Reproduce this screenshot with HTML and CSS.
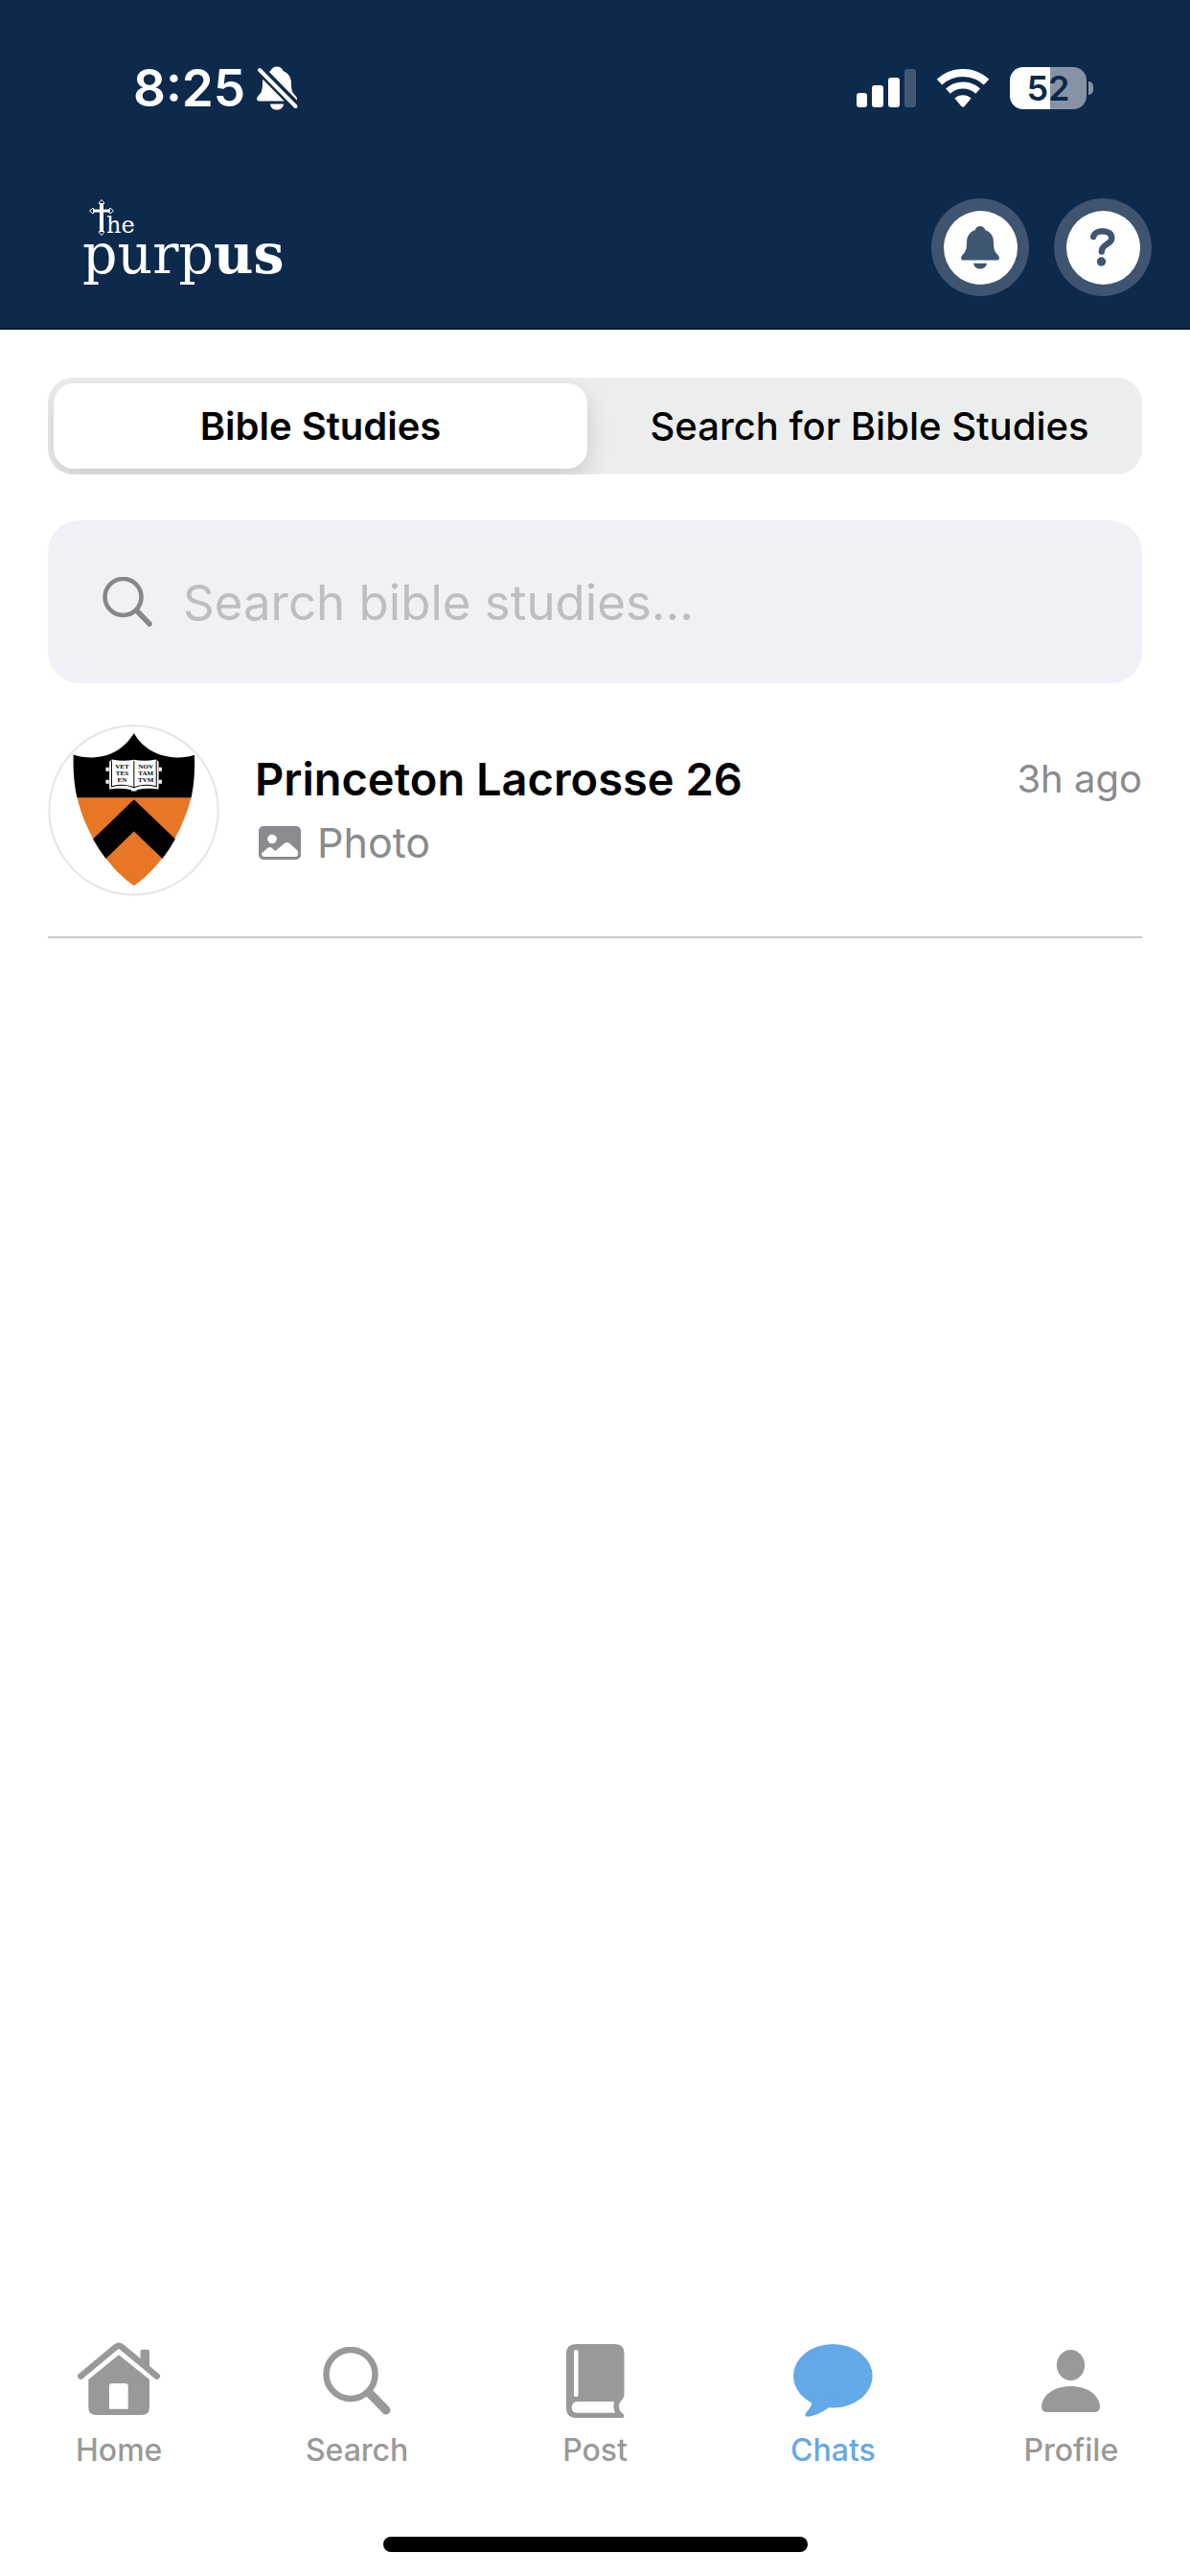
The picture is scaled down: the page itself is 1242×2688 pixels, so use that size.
FILE: index.html
```html
<!DOCTYPE html>
<html lang="en">
<head>
  <meta charset="UTF-8">
  <meta name="viewport" content="width=device-width, initial-scale=1.0">
  <title>Chats</title>
  <link rel="stylesheet" href="styles.css">
</head>
<body>
  <header class="header">
    <div class="status-bar">
      <div class="status-left">
        <span class="time">8:25</span>
        <svg width="44" height="46" viewBox="0 0 44 46">
          <path fill="#fff" d="M21 0.500C18 0.500 15.500 2 14.500 5C9 7 6 12 6 18C6 26 4.500 28 1.500 31C-1 34 0 36.500 3 36.500H39C42.500 36.500 43 34 40.500 31C37.500 28 36 26 36 18C36 12 33 7 27.500 5C26.500 2 24 0.500 21 0.500ZM14 39.500H28C27.500 43.500 25 45.500 21 45.500S14.500 43.500 14 39.500Z"/>
          <path stroke="#0d294b" stroke-width="10" d="M0 0L44 45"/>
          <path stroke="#fff" stroke-width="4" stroke-linecap="round" d="M3 4L40.500 42"/>
        </svg>
      </div>
      <div class="status-right">
        <svg width="62" height="40" viewBox="0 0 62 40" fill="#fff">
          <rect x="0" y="25" width="11" height="15" rx="3"/>
          <rect x="16" y="17" width="12" height="23" rx="3"/>
          <rect x="33" y="9" width="12" height="31" rx="3"/>
          <rect x="50" y="0" width="12" height="40" rx="3" opacity="0.22"/>
        </svg>
        <svg width="54" height="40" viewBox="0 0 54 40" fill="none" stroke="#fff">
          <path stroke-width="8" d="M2.500 13.600A36 36 0 0 1 51.500 13.600"/>
          <path stroke-width="7" d="M11.400 23.100A23 23 0 0 1 42.600 23.100"/>
          <path fill="#fff" stroke="none" d="M18.300 30.600A12.800 12.800 0 0 1 35.700 30.600L28.500 39Q27 40.500 25.500 39Z"/>
        </svg>
        <div class="battery">
          <span class="battery-level">52</span>
          <span class="battery-cap"></span>
        </div>
      </div>
    </div>
    <div class="nav-bar">
      <div class="logo">
        <div class="logo-top">
          <svg width="26" height="38" viewBox="0 0 26 38" fill="none" stroke="#fff">
            <path stroke-width="4" d="M13 4V34"/>
            <path stroke-width="3" d="M4 12H22"/>
            <path stroke-width="1" d="M13 0.500L16 4L13 6L10 4ZM13 37.500L16 34L13 32L10 34ZM0.500 12L4 9L6 12L4 15ZM25.500 12L22 9L20 12L22 15Z"/>
          </svg>
          <span class="logo-he">he</span>
        </div>
        <div class="logo-name">purp<b>us</b></div>
      </div>
      <div class="nav-buttons">
        <button class="round-btn" aria-label="Notifications">
          <span class="round-inner">
            <svg width="40" height="45" viewBox="0 0 40 45" fill="#3f5673">
              <path d="M20 0C17 0 15.500 1.800 14.500 4.200C9 6 6 10.500 6 17C6 25 4.500 27 1.500 30C-1 33 0 35.500 3 35.500H37C40 35.500 41 33 38.500 30C35.500 27 34 25 34 17C34 10.500 31 6 25.500 4.200C24.500 1.800 23 0 20 0Z"/>
              <path d="M13 38.800H27C26 43 23.500 44.500 20 44.500S14 43 13 38.800Z"/>
            </svg>
          </span>
        </button>
        <button class="round-btn" aria-label="Help">
          <span class="round-inner">
            <svg width="26" height="40" viewBox="0 0 26 40">
              <path fill="none" stroke="#3f5673" stroke-width="6.400" stroke-linecap="round" d="M3.200 9C4 5.300 8 3.200 12.500 3.200C18.500 3.200 22.300 6 22.300 10.500C22.300 17 11.800 16.500 11.800 24.500"/>
              <circle fill="#3f5673" cx="11.500" cy="35" r="4.700"/>
            </svg>
          </span>
        </button>
      </div>
    </div>
  </header>

  <main class="content">
    <div class="segments">
      <button class="segment active">Bible Studies</button>
      <button class="segment">Search for Bible Studies</button>
    </div>

    <label class="search-box">
      <svg width="52" height="52" viewBox="0 0 52 52" fill="none" stroke="#86868b">
        <circle cx="21.500" cy="21" r="19" stroke-width="4.500"/>
        <path stroke-width="5.500" stroke-linecap="round" d="M36 35.500L49 49"/>
      </svg>
      <input type="text" placeholder="Search bible studies..." aria-label="Search bible studies">
    </label>

    <ul class="chat-list">
      <li>
        <a class="chat" href="#">
          <svg class="avatar" viewBox="30 34 536 536">
            <circle cx="298" cy="302" r="264" fill="#fff" stroke="#e5e5ea" stroke-width="6"/>
            <path fill="#e77724" d="M120 255C132 320 170 400 215 457C240 489 272 520 299 538C326 520 358 489 383 457C428 400 466 320 479 255Z"/>
            <path d="M299 61C278 95 240 135 170 137C145 137 125 133 110 128C108 180 113 225 121 262H478C487 222 490 175 488 129C470 135 450 138 428 137C358 133 318 95 299 61Z"/>
            <path d="M299 268L428 392Q410 425 388 453L299 368L211 453Q189 425 171 392Z"/>
            <!-- book -->
            <path fill="#fff" d="M211 168h10v12h-10zM211 207h10v12h-10zM376 168h10v12h-10zM376 207h10v12h-10z"/>
            <path fill="#fff" d="M222 150L230 143Q265 150 299 144Q333 150 368 143L376 150V236Q340 231 307 238V242H291V238Q258 231 222 236Z"/>
            <path fill="none" stroke="#000" stroke-width="3" d="M229 146V228Q270 218 299 231Q328 218 369 228V146M299 147V230"/>
            <g class="book-text">
              <text x="262" y="171">VET</text>
              <text x="262" y="192">TES</text>
              <text x="262" y="213">EN</text>
              <text x="336" y="171">NOV</text>
              <text x="336" y="192">TAM</text>
              <text x="336" y="213">TVM</text>
            </g>
          </svg>
          <div class="chat-body">
            <div class="chat-title">
              <span class="chat-name">Princeton Lacrosse 26</span>
              <span class="chat-time">3h ago</span>
            </div>
            <div class="chat-preview">
              <svg width="44" height="35" viewBox="0 0 44 35">
                <rect width="44" height="35" rx="5" fill="#8a8a8f"/>
                <circle cx="14" cy="13.500" r="4.800" fill="#fff"/>
                <path fill="#fff" d="M3 28.500L9.500 22.800Q11.500 21.200 13.500 22.800L17.500 26L27 17.800Q29.500 16 32 17.800L41 26V29Q41 32 38 32H6Q3 32 3 28.500Z"/>
              </svg>
              <span>Photo</span>
            </div>
          </div>
        </a>
      </li>
    </ul>
  </main>

  <nav class="tab-bar">
    <a class="tab" href="#">
      <span class="tab-icon">
        <svg width="86" height="80" viewBox="0 0 86 80">
          <path fill="none" stroke="currentColor" stroke-width="6.500" stroke-linecap="round" stroke-linejoin="round" d="M3.300 35.500L40 5Q43 2.500 46 5L82.700 35.500"/>
          <path fill="currentColor" d="M65.500 24V9.500Q65.500 7.700 67.500 7.700H73Q75 7.700 75 9.500V31Z"/>
          <path fill="currentColor" fill-rule="evenodd" d="M43 13.300L75 39V68Q75 76 67 76H19.300Q11.300 76 11.300 68V39ZM36 43Q33 43 33 46V69.700H52.700V46Q52.700 43 49.700 43Z"/>
        </svg>
      </span>
      <span>Home</span>
    </a>
    <a class="tab" href="#">
      <span class="tab-icon">
        <svg width="71" height="71" viewBox="0 0 71 71" fill="none" stroke="currentColor">
          <circle cx="29" cy="28.500" r="25.500" stroke-width="6.500"/>
          <path stroke-width="9" stroke-linecap="round" d="M49 48.500L66 66"/>
        </svg>
      </span>
      <span>Search</span>
    </a>
    <a class="tab" href="#">
      <span class="tab-icon">
        <svg width="61" height="77" viewBox="0 0 61 77">
          <path fill="currentColor" d="M10 0H51Q60.500 0 60.500 10V52Q60.500 56 57 59.500Q53 64 56.500 70L60 73.500Q61.500 77 58 77H10Q0 77 0 66V10Q0 0 10 0Z"/>
          <rect fill="#fff" x="8" y="6" width="4.500" height="49" rx="2"/>
          <path fill="#fff" d="M11.500 60H50Q48.500 66 51 71.700H11.500Q5.700 71.500 5.700 66T11.500 60Z"/>
        </svg>
      </span>
      <span>Post</span>
    </a>
    <a class="tab active" href="#">
      <span class="tab-icon">
        <svg width="83" height="76" viewBox="0 0 83 76" fill="currentColor">
          <ellipse cx="41.300" cy="33.300" rx="41.300" ry="33.300"/>
          <path d="M16 59Q20.500 61 18.500 64.500Q16 68.500 12.500 72.500Q11.500 76 15.500 75.800Q25 75 37 66.300L41 50Z"/>
        </svg>
      </span>
      <span>Chats</span>
    </a>
    <a class="tab" href="#">
      <span class="tab-icon">
        <svg width="61" height="65" viewBox="0 0 61 65" fill="currentColor">
          <ellipse cx="30.500" cy="16" rx="14.600" ry="16"/>
          <path d="M0 59C1 47 13 38 30.500 38S60 47 61 59Q61 65 55 65H6Q0 65 0 59Z"/>
        </svg>
      </span>
      <span>Profile</span>
    </a>
  </nav>
  <div class="home-indicator"></div>
</body>
</html>
```

FILE: styles.css
```css
* {
  box-sizing: border-box;
}
body {
  margin: 0;
  min-height: 100vh;
  display: flex;
  flex-direction: column;
  background: #fff;
  color: #000;
  font-family: Inter, "Liberation Sans", sans-serif;
}
svg {
  display: block;
  flex-shrink: 0;
}
button {
  border: 0;
  padding: 0;
  background: none;
  font-family: inherit;
  color: inherit;
}
a {
  color: inherit;
  text-decoration: none;
}

/* header */
.header {
  background: #0d294b;
  border-bottom: 2px solid #04193c;
  color: #fff;
}
.status-bar {
  height: 184px;
  padding: 0 101px 0 139px;
  display: flex;
  align-items: center;
  justify-content: space-between;
}
.status-left {
  display: flex;
  align-items: center;
  gap: 12px;
}
.status-right {
  display: flex;
  align-items: center;
  gap: 22px;
}
.time {
  font-size: 53px;
  font-weight: 600;
}
.battery {
  display: flex;
  align-items: center;
  gap: 2px;
}
.battery-level {
  width: 80px;
  height: 44px;
  border-radius: 14px;
  background: linear-gradient(to right, #fff 52%, #8793a5 52%);
  color: #0d294b;
  font-size: 36px;
  font-weight: 600;
  line-height: 44px;
  text-align: center;
}
.battery-cap {
  width: 5px;
  height: 14px;
  border-radius: 0 7px 7px 0;
  background: #8793a5;
}
.nav-bar {
  padding: 23px 40px 33px 86px;
  display: flex;
  align-items: flex-start;
  justify-content: space-between;
}
.logo {
  font-family: "DejaVu Serif", serif;
}
.logo-top {
  display: flex;
  align-items: flex-end;
  padding: 1px 0 0 7px;
}
.logo-he {
  margin-left: -8px;
  font-size: 24px;
  line-height: 22px;
}
.logo-name {
  font-size: 57px;
  line-height: 38px;
}
.nav-buttons {
  display: flex;
  gap: 26px;
}
.round-btn {
  width: 102px;
  height: 102px;
  border-radius: 50%;
  background: #3f5470;
  display: flex;
  align-items: center;
  justify-content: center;
}
.round-inner {
  width: 77px;
  height: 77px;
  border-radius: 50%;
  background: #fff;
  display: flex;
  align-items: center;
  justify-content: center;
}

/* content */
.content {
  flex: 1;
  padding: 50px 50px 0;
}
.segments {
  display: flex;
  height: 101px;
  padding: 6px;
  gap: 16px;
  overflow: hidden;
  border-radius: 26px;
  background: #eceeed;
}
.segment {
  flex: 1;
  border-radius: 21px;
  font-size: 40px;
  font-weight: 500;
}
.segment.active {
  background: #fff;
  font-weight: 600;
  box-shadow: 0 9px 24px rgba(0, 0, 0, 0.15);
}
.search-box {
  display: flex;
  align-items: center;
  gap: 32px;
  height: 170px;
  margin-top: 48px;
  padding: 0 57px;
  border-radius: 33px;
  background: #f0f1f6;
}
.search-box input {
  flex: 1;
  min-width: 0;
  border: 0;
  padding: 0;
  outline: none;
  background: none;
  font-family: inherit;
  font-size: 51px;
}
.search-box input::placeholder {
  color: #bdbdc2;
}
.chat-list {
  margin: 43px 0 0;
  padding: 0;
  list-style: none;
}
.chat {
  display: flex;
  gap: 37px;
  padding-bottom: 42px;
  border-bottom: 2px solid #c9c9cb;
}
.avatar {
  width: 179px;
  height: 179px;
}
.book-text {
  font: bold 21px "Liberation Serif", serif;
  text-anchor: middle;
}
.chat-body {
  flex: 1;
  padding-top: 28px;
}
.chat-title {
  display: flex;
  align-items: center;
  justify-content: space-between;
  line-height: 58px;
}
.chat-name {
  font-size: 47px;
  font-weight: 600;
}
.chat-time {
  color: #8a8a8f;
  font-size: 40px;
}
.chat-preview {
  display: flex;
  align-items: center;
  gap: 17px;
  margin-top: 9px;
  padding-left: 4px;
  color: #8a8a8f;
  font-size: 43px;
  line-height: 56px;
}

/* bottom tabs */
.tab-bar {
  display: flex;
}
.tab {
  flex: 1;
  display: flex;
  flex-direction: column;
  align-items: center;
  gap: 13px;
  color: #999;
  font-size: 32px;
  font-weight: 500;
  line-height: 40px;
}
.tab.active {
  color: #63a9e7;
}
.tab-icon {
  height: 80px;
  display: flex;
  align-items: center;
}
.home-indicator {
  width: 443px;
  height: 16px;
  margin: 70px auto 25px;
  border-radius: 8px;
  background: #000;
}
```
